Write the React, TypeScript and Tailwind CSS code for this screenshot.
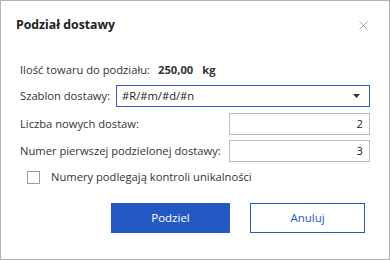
import React from 'react';

const font = { fontFamily: '"Open Sans", "Noto Sans", sans-serif' };

export default function App() {
  return (
    <div className="w-[390px] h-[260px] bg-white border border-[#b4b4b4] text-[11.2px] text-[#333] whitespace-nowrap" style={font}>
      {/* Header */}
      <div className="flex items-center justify-between h-[46px] pl-[15px] pr-[21px] pt-[2px]">
        <h2 className="text-[12.3px] font-bold text-[#222]">Podział dostawy</h2>
        <svg className="w-[9px] h-[9px]" viewBox="0 0 9 9" fill="none" stroke="#a8a8a8" strokeWidth={1}>
          <path d="M0.5 0.5l8 8M8.5 0.5l-8 8" />
        </svg>
      </div>

      {/* Body */}
      <div className="flex flex-col pl-[19px] pr-[19px] mt-[12px]">
        <div className="flex items-center h-[22px]">
          <span>Ilość towaru do podziału:</span>
          <span className="ml-[8px] font-bold">250,00</span>
          <span className="ml-[9px] font-bold">kg</span>
        </div>

        <div className="flex items-center h-[22px] mt-[4px]">
          <span className="w-[96px] shrink-0">Szablon dostawy:</span>
          <div className="flex-1 h-[22px] border border-[#2b5fc4] flex items-center justify-between pl-[5px] pr-[9px]">
            <span className="text-[#222]">#R/#m/#d/#n</span>
            <svg className="w-[7px] h-[4px]" viewBox="0 0 7 4" fill="#333">
              <path d="M0 0h7L3.5 4z" />
            </svg>
          </div>
        </div>

        <div className="flex items-center h-[22px] mt-[6px]">
          <span className="w-[209px] shrink-0">Liczba nowych dostaw:</span>
          <div className="flex-1 h-[22px] border border-[#bdbdbd] flex items-center justify-end pr-[6px] text-[#222]">2</div>
        </div>

        <div className="flex items-center h-[22px] mt-[5px]">
          <span className="w-[209px] shrink-0">Numer pierwszej podzielonej dostawy:</span>
          <div className="flex-1 h-[22px] border border-[#bdbdbd] flex items-center justify-end pr-[6px] text-[#222]">3</div>
        </div>

        <label className="flex items-center h-[22px] mt-[4px] pl-[7px]">
          <span className="w-[13px] h-[13px] border border-[#9a9a9a] bg-white" />
          <span className="ml-[11px]">Numery podlegają kontroli unikalności</span>
        </label>

        <div className="flex mt-[15px] pl-[91px]">
          <button className="w-[119px] h-[30px] bg-[#2459c4] text-white text-[11.5px]">Podziel</button>
          <button className="w-[115px] h-[30px] ml-[20px] border border-[#2459c4] bg-white text-[#2459c4] text-[11.5px]">Anuluj</button>
        </div>
      </div>
    </div>
  );
}
